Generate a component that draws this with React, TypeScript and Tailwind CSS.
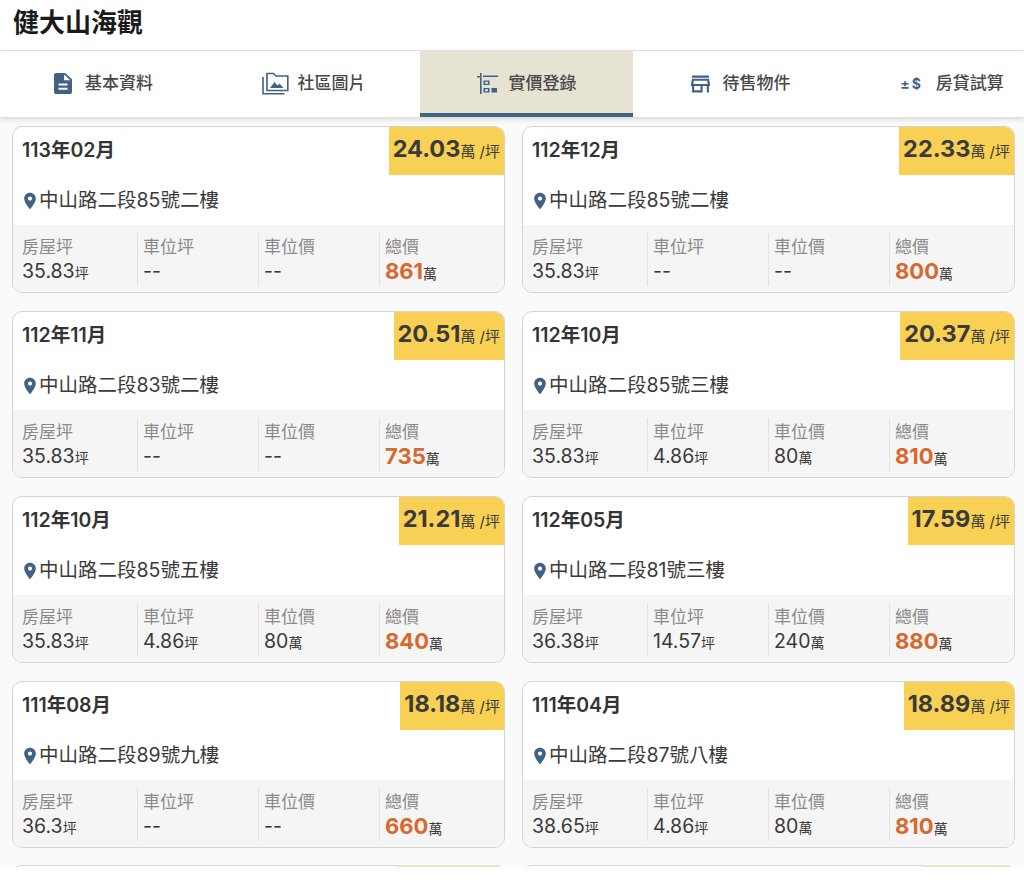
import type { ReactNode } from "react";

const BLUE = "#3f6285";

type Deal = {
  date: string;
  price: string;
  addr: string;
  area: string;
  parkArea: string;
  parkPrice: string;
  total: string;
};

const deals: Deal[] = [
  { date: "113年02月", price: "24.03", addr: "中山路二段85號二樓", area: "35.83", parkArea: "", parkPrice: "", total: "861" },
  { date: "112年12月", price: "22.33", addr: "中山路二段85號二樓", area: "35.83", parkArea: "", parkPrice: "", total: "800" },
  { date: "112年11月", price: "20.51", addr: "中山路二段83號二樓", area: "35.83", parkArea: "", parkPrice: "", total: "735" },
  { date: "112年10月", price: "20.37", addr: "中山路二段85號三樓", area: "35.83", parkArea: "4.86", parkPrice: "80", total: "810" },
  { date: "112年10月", price: "21.21", addr: "中山路二段85號五樓", area: "35.83", parkArea: "4.86", parkPrice: "80", total: "840" },
  { date: "112年05月", price: "17.59", addr: "中山路二段81號三樓", area: "36.38", parkArea: "14.57", parkPrice: "240", total: "880" },
  { date: "111年08月", price: "18.18", addr: "中山路二段89號九樓", area: "36.3", parkArea: "", parkPrice: "", total: "660" },
  { date: "111年04月", price: "18.89", addr: "中山路二段87號八樓", area: "38.65", parkArea: "4.86", parkPrice: "80", total: "810" },
];

function DocIcon() {
  return (
    <svg width="18" height="21" viewBox="4 2 16 20" fill={BLUE} preserveAspectRatio="none">
      <path d="M14 2H6c-1.1 0-1.99.9-1.99 2L4 20c0 1.1.89 2 1.99 2H18c1.1 0 2-.9 2-2V8l-6-6zm2 16H8v-2h8v2zm0-4H8v-2h8v2zm-3-5V3.5L18.5 9H13z" />
    </svg>
  );
}

function PhotosIcon() {
  return (
    <svg width="27" height="23" viewBox="0 0 27 23" fill="none" stroke={BLUE} strokeWidth="1.6">
      <path d="M1 5v16.700h21.500" />
      <path d="M5 1.500h6.500l2.500 2.500h11.800v14.500H5z" />
      <path d="M8 16l4.500-6 3 3.500 2-2 4 4.500z" fill={BLUE} stroke="none" />
    </svg>
  );
}

function ChartIcon() {
  return (
    <svg width="21" height="21" viewBox="0 0 21 21" fill={BLUE}>
      <path d="M3 0h1.600v21H3zM0 3h3v1.500H0zM6 2.500h15V4H6z" />
      <path d="M6.500 7.500h6v4.500h-6zM8 8.800v1.900h3V8.800zM6.500 15h6v4.500h-6zM8 16.300v1.900h3v-1.900z" fillRule="evenodd" />
      <path d="M14.500 15H20v4.500h-5.500z" />
    </svg>
  );
}

function StoreIcon() {
  return (
    <svg width="19" height="18" viewBox="3 4 18 16" fill={BLUE}>
      <path d="M20 4H4v2h16V4zm1 10v-2l-1-5H4l-1 5v2h1v6h10v-6h4v6h2v-6h1zm-9 4H6v-4h6v4zm-6.880-6l.6-3h12.560l.6 3H5.120z" />
    </svg>
  );
}

function Tab({ icon, label, width, active }: { icon: ReactNode; label: string; width: string; active?: boolean }) {
  return (
    <div
      className={`${width} shrink-0 h-[66px] flex items-center justify-center ${
        active ? "bg-[#e6e3d3] shadow-[inset_0_-4px_0_#3f6285]" : ""
      }`}
    >
      <div className="flex items-center text-[17px] font-medium text-[#484848] mb-[1px]">
        {icon}
        {label}
      </div>
    </div>
  );
}

function Stat({ label, children, first }: { label: string; children: ReactNode; first?: boolean }) {
  return (
    <div className={first ? "" : "border-l border-[#e2e2e2] pl-[5px]"}>
      <div className="text-[17px] leading-[24px] pt-[2px] text-[#8a8a8a]">{label}</div>
      <div className="text-[19.500px] leading-[24px] text-[#3a3a3a]">{children}</div>
    </div>
  );
}

function Unit({ children }: { children: ReactNode }) {
  return <span className="text-[14px]">{children}</span>;
}

function DealCard({ deal }: { deal: Deal }) {
  return (
    <div className="h-[167px] rounded-[10px] border border-[#d4d4d4] bg-white overflow-hidden flex flex-col">
      <div className="flex justify-between h-[48px]">
        <div className="pl-[9px] pt-[10px] text-[19.500px] leading-[26px] font-semibold text-[#333333]">{deal.date}</div>
        <div className="bg-[#f8d053] pl-[4px] pr-[4px] h-[48px] pt-[6px] text-[#3a3a3a] whitespace-nowrap">
          <span className="text-[23.500px] leading-[32px] font-bold">{deal.price}</span>
          <span className="text-[15px] leading-[32px]">萬 /坪</span>
        </div>
      </div>
      <div className="h-[50px] flex items-center pl-[8px] pt-[2px] text-[19.500px] text-[#3a3a3a]">
        <svg width="20" height="20" viewBox="0 0 24 24" fill={BLUE} className="ml-[-1px] mr-[-1px]">
          <path d="M12 2C8.130 2 5 5.130 5 9c0 5.250 7 13 7 13s7-7.750 7-13c0-3.870-3.130-7-7-7zm0 9.500c-1.380 0-2.500-1.120-2.500-2.500s1.120-2.500 2.500-2.500 2.500 1.120 2.500 2.500-1.120 2.500-2.500 2.500z" />
        </svg>
        <span>{deal.addr}</span>
      </div>
      <div className="flex-1 bg-[#f5f5f5] pl-[9px] pt-[8px]">
        <div className="grid grid-cols-[115px_121px_121px_1fr] h-[50px]">
          <Stat label="房屋坪" first>
            {deal.area}
            <Unit>坪</Unit>
          </Stat>
          <Stat label="車位坪">
            {deal.parkArea ? (
              <>
                {deal.parkArea}
                <Unit>坪</Unit>
              </>
            ) : (
              "--"
            )}
          </Stat>
          <Stat label="車位價">
            {deal.parkPrice ? (
              <>
                {deal.parkPrice}
                <Unit>萬</Unit>
              </>
            ) : (
              "--"
            )}
          </Stat>
          <Stat label="總價">
            <span className="text-[22px] font-bold text-[#d9682f]">{deal.total}</span>
            <Unit>萬</Unit>
          </Stat>
        </div>
      </div>
    </div>
  );
}

function NextCard({ badge }: { badge: string }) {
  return (
    <div className="h-[20px] mt-[-1px] rounded-t-[10px] border border-[#d4d4d4] bg-white flex justify-end pr-[4px]">
      <div className={`${badge} h-[20px] mt-[-1px] bg-[#e9e5c6]`} />
    </div>
  );
}

export default function App() {
  return (
    <div
      className="w-[1024px] h-[883px] bg-white overflow-hidden"
      style={{ fontFamily: 'Inter, "Noto Sans CJK TC", sans-serif' }}
    >
      <div className="h-[51px] border-b border-[#e6e6e6] pl-[13px] pt-[6px] text-[26px] leading-[34px] font-bold text-[#1a1a1a]">
        健大山海觀
      </div>
      <div className="relative z-10 flex h-[66px] overflow-hidden bg-white shadow-[0_2px_5px_rgba(0,0,0,0.15)]">
        <Tab width="w-[207px]" icon={<span className="mr-[13px] flex"><DocIcon /></span>} label="基本資料" />
        <Tab width="w-[213px]" icon={<span className="mr-[9px] flex"><PhotosIcon /></span>} label="社區圖片" />
        <Tab width="w-[213px]" active icon={<span className="mr-[11px] flex"><ChartIcon /></span>} label="實價登錄" />
        <Tab width="w-[215px]" icon={<span className="mr-[13px] flex"><StoreIcon /></span>} label="待售物件" />
        <Tab
          width="w-[208px]"
          icon={
            <span className="mr-[13px] text-[14px] font-bold tracking-[2px] text-[#3f6285] whitespace-nowrap">±$</span>
          }
          label="房貸試算"
        />
      </div>
      <div className="h-[750px] bg-[#fafafa] overflow-hidden px-[12px] pt-[9px]">
        <div className="grid grid-cols-[493px_493px] gap-x-[17px] gap-y-[18px]">
          {deals.map((d, i) => (
            <DealCard key={i} deal={d} />
          ))}
          <NextCard badge="w-[104px]" />
          <NextCard badge="w-[88px]" />
        </div>
      </div>
    </div>
  );
}
